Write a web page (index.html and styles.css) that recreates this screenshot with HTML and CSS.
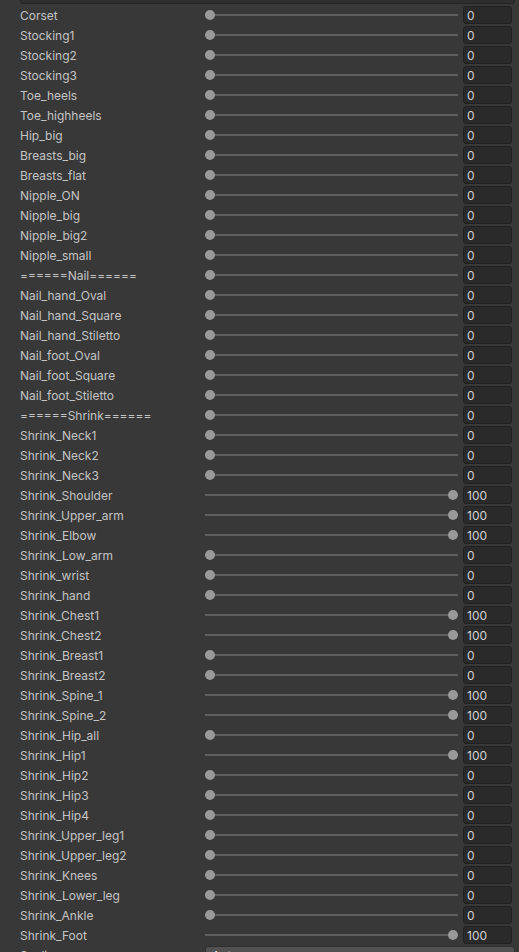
FILE: index.html
```html
<!DOCTYPE html>
<html>
<head>
<meta charset="utf-8">
<link rel="stylesheet" href="styles.css">
</head>
<body>
<div class="panel">
  <div class="topbox"></div>
  <div class="list">
    <div class="row"><span class="label">Corset</span><div class="slider v0"><span class="track"></span><span class="thumb"></span></div><div class="field">0</div></div>
    <div class="row"><span class="label">Stocking1</span><div class="slider v0"><span class="track"></span><span class="thumb"></span></div><div class="field">0</div></div>
    <div class="row"><span class="label">Stocking2</span><div class="slider v0"><span class="track"></span><span class="thumb"></span></div><div class="field">0</div></div>
    <div class="row"><span class="label">Stocking3</span><div class="slider v0"><span class="track"></span><span class="thumb"></span></div><div class="field">0</div></div>
    <div class="row"><span class="label">Toe_heels</span><div class="slider v0"><span class="track"></span><span class="thumb"></span></div><div class="field">0</div></div>
    <div class="row"><span class="label">Toe_highheels</span><div class="slider v0"><span class="track"></span><span class="thumb"></span></div><div class="field">0</div></div>
    <div class="row"><span class="label">Hip_big</span><div class="slider v0"><span class="track"></span><span class="thumb"></span></div><div class="field">0</div></div>
    <div class="row"><span class="label">Breasts_big</span><div class="slider v0"><span class="track"></span><span class="thumb"></span></div><div class="field">0</div></div>
    <div class="row"><span class="label">Breasts_flat</span><div class="slider v0"><span class="track"></span><span class="thumb"></span></div><div class="field">0</div></div>
    <div class="row"><span class="label">Nipple_ON</span><div class="slider v0"><span class="track"></span><span class="thumb"></span></div><div class="field">0</div></div>
    <div class="row"><span class="label">Nipple_big</span><div class="slider v0"><span class="track"></span><span class="thumb"></span></div><div class="field">0</div></div>
    <div class="row"><span class="label">Nipple_big2</span><div class="slider v0"><span class="track"></span><span class="thumb"></span></div><div class="field">0</div></div>
    <div class="row"><span class="label">Nipple_small</span><div class="slider v0"><span class="track"></span><span class="thumb"></span></div><div class="field">0</div></div>
    <div class="row"><span class="label">======Nail======</span><div class="slider v0"><span class="track"></span><span class="thumb"></span></div><div class="field">0</div></div>
    <div class="row"><span class="label">Nail_hand_Oval</span><div class="slider v0"><span class="track"></span><span class="thumb"></span></div><div class="field">0</div></div>
    <div class="row"><span class="label">Nail_hand_Square</span><div class="slider v0"><span class="track"></span><span class="thumb"></span></div><div class="field">0</div></div>
    <div class="row"><span class="label">Nail_hand_Stiletto</span><div class="slider v0"><span class="track"></span><span class="thumb"></span></div><div class="field">0</div></div>
    <div class="row"><span class="label">Nail_foot_Oval</span><div class="slider v0"><span class="track"></span><span class="thumb"></span></div><div class="field">0</div></div>
    <div class="row"><span class="label">Nail_foot_Square</span><div class="slider v0"><span class="track"></span><span class="thumb"></span></div><div class="field">0</div></div>
    <div class="row"><span class="label">Nail_foot_Stiletto</span><div class="slider v0"><span class="track"></span><span class="thumb"></span></div><div class="field">0</div></div>
    <div class="row"><span class="label">======Shrink======</span><div class="slider v0"><span class="track"></span><span class="thumb"></span></div><div class="field">0</div></div>
    <div class="row"><span class="label">Shrink_Neck1</span><div class="slider v0"><span class="track"></span><span class="thumb"></span></div><div class="field">0</div></div>
    <div class="row"><span class="label">Shrink_Neck2</span><div class="slider v0"><span class="track"></span><span class="thumb"></span></div><div class="field">0</div></div>
    <div class="row"><span class="label">Shrink_Neck3</span><div class="slider v0"><span class="track"></span><span class="thumb"></span></div><div class="field">0</div></div>
    <div class="row"><span class="label">Shrink_Shoulder</span><div class="slider v100"><span class="track"></span><span class="thumb"></span></div><div class="field">100</div></div>
    <div class="row"><span class="label">Shrink_Upper_arm</span><div class="slider v100"><span class="track"></span><span class="thumb"></span></div><div class="field">100</div></div>
    <div class="row"><span class="label">Shrink_Elbow</span><div class="slider v100"><span class="track"></span><span class="thumb"></span></div><div class="field">100</div></div>
    <div class="row"><span class="label">Shrink_Low_arm</span><div class="slider v0"><span class="track"></span><span class="thumb"></span></div><div class="field">0</div></div>
    <div class="row"><span class="label">Shrink_wrist</span><div class="slider v0"><span class="track"></span><span class="thumb"></span></div><div class="field">0</div></div>
    <div class="row"><span class="label">Shrink_hand</span><div class="slider v0"><span class="track"></span><span class="thumb"></span></div><div class="field">0</div></div>
    <div class="row"><span class="label">Shrink_Chest1</span><div class="slider v100"><span class="track"></span><span class="thumb"></span></div><div class="field">100</div></div>
    <div class="row"><span class="label">Shrink_Chest2</span><div class="slider v100"><span class="track"></span><span class="thumb"></span></div><div class="field">100</div></div>
    <div class="row"><span class="label">Shrink_Breast1</span><div class="slider v0"><span class="track"></span><span class="thumb"></span></div><div class="field">0</div></div>
    <div class="row"><span class="label">Shrink_Breast2</span><div class="slider v0"><span class="track"></span><span class="thumb"></span></div><div class="field">0</div></div>
    <div class="row"><span class="label">Shrink_Spine_1</span><div class="slider v100"><span class="track"></span><span class="thumb"></span></div><div class="field">100</div></div>
    <div class="row"><span class="label">Shrink_Spine_2</span><div class="slider v100"><span class="track"></span><span class="thumb"></span></div><div class="field">100</div></div>
    <div class="row"><span class="label">Shrink_Hip_all</span><div class="slider v0"><span class="track"></span><span class="thumb"></span></div><div class="field">0</div></div>
    <div class="row"><span class="label">Shrink_Hip1</span><div class="slider v100"><span class="track"></span><span class="thumb"></span></div><div class="field">100</div></div>
    <div class="row"><span class="label">Shrink_Hip2</span><div class="slider v0"><span class="track"></span><span class="thumb"></span></div><div class="field">0</div></div>
    <div class="row"><span class="label">Shrink_Hip3</span><div class="slider v0"><span class="track"></span><span class="thumb"></span></div><div class="field">0</div></div>
    <div class="row"><span class="label">Shrink_Hip4</span><div class="slider v0"><span class="track"></span><span class="thumb"></span></div><div class="field">0</div></div>
    <div class="row"><span class="label">Shrink_Upper_leg1</span><div class="slider v0"><span class="track"></span><span class="thumb"></span></div><div class="field">0</div></div>
    <div class="row"><span class="label">Shrink_Upper_leg2</span><div class="slider v0"><span class="track"></span><span class="thumb"></span></div><div class="field">0</div></div>
    <div class="row"><span class="label">Shrink_Knees</span><div class="slider v0"><span class="track"></span><span class="thumb"></span></div><div class="field">0</div></div>
    <div class="row"><span class="label">Shrink_Lower_leg</span><div class="slider v0"><span class="track"></span><span class="thumb"></span></div><div class="field">0</div></div>
    <div class="row"><span class="label">Shrink_Ankle</span><div class="slider v0"><span class="track"></span><span class="thumb"></span></div><div class="field">0</div></div>
    <div class="row"><span class="label">Shrink_Foot</span><div class="slider v100"><span class="track"></span><span class="thumb"></span></div><div class="field">100</div></div>
    <div class="row last"><span class="label">Scaling</span><div class="dropdown">Auto</div></div>
  </div>
</div>
</body>
</html>
```

FILE: styles.css
```css
html, body {
  margin: 0;
  padding: 0;
  background: #383838;
  height: 100%;
  overflow: hidden;
}
.panel {
  width: 519px;
  height: 952px;
  overflow: hidden;
  font-family: Inter, "Noto Sans", sans-serif;
  font-size: 12px;
  color: #c4c4c4;
}
.topbox {
  margin: -3px 4px 0 20px;
  height: 7px;
  box-sizing: border-box;
  background: #2e2e2e;
  border: 1px solid #242424;
  border-radius: 0 0 3px 3px;
}
.list {
  padding-top: 1px;
}
.row {
  display: grid;
  grid-template-columns: 180px 253px 49px;
  column-gap: 5px;
  align-items: center;
  height: 20px;
  padding-left: 20px;
}
.label {
  white-space: nowrap;
  line-height: 18px;
  padding-top: 2px;
}
.slider {
  position: relative;
  height: 20px;
}
.track {
  position: absolute;
  left: 0;
  right: 0;
  top: 9px;
  height: 2px;
  background: #5e5e5e;
}
.thumb {
  position: absolute;
  top: 5px;
  width: 10px;
  height: 10px;
  border-radius: 50%;
  background: #999999;
}
.v0 .thumb { left: 0; }
.v100 .thumb { left: 243px; }
.field {
  height: 18px;
  box-sizing: border-box;
  background: #2a2a2a;
  border: 1px solid #212121;
  border-radius: 3px;
  padding-left: 3px;
  padding-top: 1px;
  line-height: 15px;
  color: #d2d2d2;
}
.row.last {
  grid-template-columns: 180px 310px;
  align-items: start;
}
.row.last .label {
  line-height: 16px;
  padding-top: 3px;
}
.dropdown {
  margin-top: 1px;
  height: 18px;
  box-sizing: border-box;
  background: #515151;
  border: 1px solid #303030;
  border-radius: 3px;
  padding-left: 6px;
  padding-top: 1px;
  line-height: 15px;
  color: #e0e0e0;
}
```
